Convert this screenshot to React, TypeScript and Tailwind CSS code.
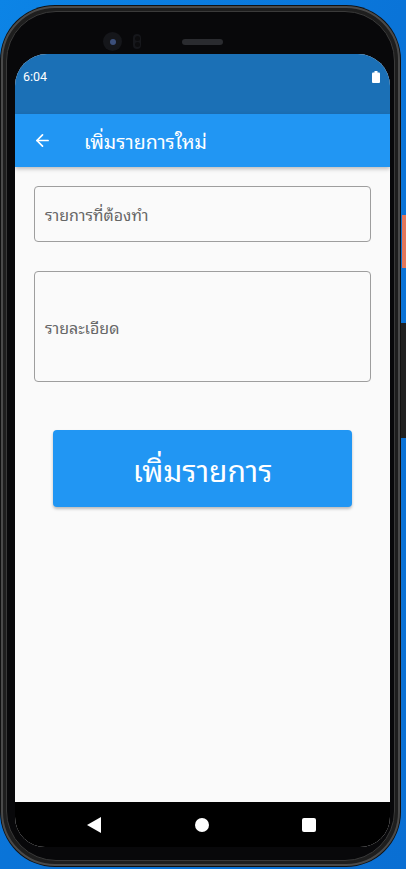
import { ArrowLeft } from "lucide-react";

const thai = "font-['Noto_Sans_Thai_Looped','Noto_Sans','Noto_Sans_Thai','Roboto',sans-serif]";

export default function App() {
  return (
    <div className={`relative w-[406px] h-[869px] overflow-hidden bg-gradient-to-br from-[#0c84e6] via-[#0a74d8] to-[#0a6fd3] ${thai}`}>
      {/* bits of the desktop behind the phone */}
      <div className="absolute right-0 top-[215px] w-[4px] h-[53px] bg-[#e2765a]" />
      <div className="absolute right-0 top-[323px] w-[5px] h-[115px] bg-[#202020]" />

      <div className="ml-[1px] mt-[6px] w-[399px] h-[860px] rounded-[54px] bg-[#1e1e1e] border-[2px] border-[#4a4a4a] p-[3px] shadow-[0_0_0_1px_#111]">
        <div className="flex h-full flex-col rounded-[50px] border border-[#3a3a3a] bg-[#08080a] pl-[8px] pr-[4px] pt-[42px] pb-[13px]">
          {/* earpiece + camera, sit in the bezel */}
          <div className="relative h-0">
            <div className="absolute left-[88px] top-[-22px] w-[19px] h-[19px] rounded-full bg-[#15161a] flex items-center justify-center">
              <div className="w-[6px] h-[6px] rounded-full bg-[#3c4f7a]" />
            </div>
            <div className="absolute left-[118px] top-[-20px] w-[8px] h-[15px] rounded-full bg-[#16171b] flex flex-col items-center justify-around py-[1px]">
              <div className="w-[5px] h-[5px] rounded-full bg-[#0c0c0e]" />
              <div className="w-[5px] h-[5px] rounded-full bg-[#0c0c0e]" />
            </div>
            <div className="absolute left-[167px] top-[-15px] w-[41px] h-[6px] rounded-full bg-[#2a2b2f]" />
          </div>

          <div className="flex flex-1 flex-col overflow-hidden rounded-t-[32px] rounded-b-[30px] bg-[#fafafa] w-[375px]">
            {/* status bar */}
            <div className="h-[60px] bg-[#1b70b6] flex items-start justify-between px-[8px] pt-[15px]">
              <span className="text-white text-[12.5px] leading-[16px] font-['Roboto',sans-serif]">6:04</span>
              <svg width="8" height="12" viewBox="0 0 8 12" className="mt-[2px] mr-[2px]">
                <rect x="2.5" y="0" width="3" height="2" fill="#fff" />
                <rect x="0" y="1.5" width="8" height="10.5" rx="1" fill="#fff" />
              </svg>
            </div>

            {/* app bar */}
            <div className="relative z-10 h-[53px] bg-[#2196f3] flex items-center shadow-[0_2px_4px_rgba(0,0,0,0.25)]">
              <ArrowLeft className="ml-[18px] text-white" size={19} strokeWidth={2.2} />
              <span className="ml-[32px] text-white text-[19.5px] leading-none">เพิ่มรายการใหม่</span>
            </div>

            {/* body */}
            <div className="flex flex-1 flex-col px-[19px] pt-[19px]">
              <div className="h-[56px] w-[337px] rounded-[4px] border border-[#9e9e9e] flex items-center px-[10px]">
                <span className="text-[#666] text-[16px]">รายการที่ต้องทำ</span>
              </div>
              <div className="mt-[29px] h-[111px] w-[337px] rounded-[4px] border border-[#9e9e9e] flex items-center px-[10px]">
                <span className="text-[#666] text-[16px]">รายละเอียด</span>
              </div>
              <button className="mt-[48px] ml-[19px] h-[77px] w-[299px] rounded-[4px] bg-[#2196f3] text-white text-[30px] shadow-[0_2px_3px_rgba(0,0,0,0.25)]">
                เพิ่มรายการ
              </button>
            </div>

            {/* nav bar */}
            <div className="h-[45px] bg-black flex items-center">
              <svg width="14" height="16" viewBox="0 0 14 16" className="ml-[72px]">
                <path d="M14 0 L14 16 L0 8 Z" fill="#fff" />
              </svg>
              <div className="ml-[94px] w-[14px] h-[14px] rounded-full bg-white" />
              <div className="ml-[93px] w-[14px] h-[14px] rounded-[2px] bg-white" />
            </div>
          </div>
        </div>
      </div>
    </div>
  );
}
